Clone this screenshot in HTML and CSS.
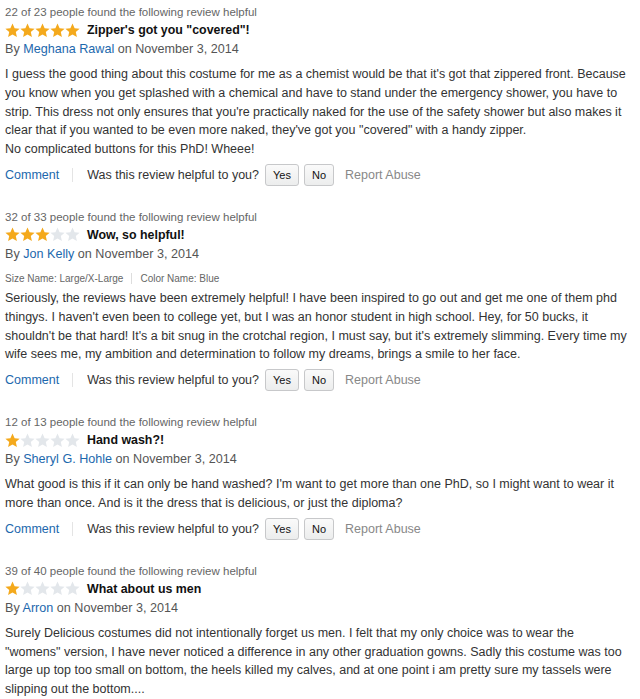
FILE: index.html
```html
<!DOCTYPE html>
<html lang="en">
<head>
    <meta charset="UTF-8">
    <title>Customer Reviews</title>
    <link rel="stylesheet" href="styles.css">
</head>
<body>
    <svg width="0" height="0" class="defs">
        <defs>
            <path id="star" d="M7.5 0.6 L9.6 5.2 L14.6 5.7 L10.8 9.0 L11.9 14 L7.5 11.4 L3.1 14 L4.2 9.0 L0.4 5.7 L5.4 5.2 Z"/>
        </defs>
    </svg>

    <!-- REVIEW 1 -->
    <div class="review">
        <div class="helpful">22 of 23 people found the following review helpful</div>
        <div class="title-row">
            <span class="stars">
                <svg viewBox="0 0 15 15" class="on"><use href="#star"/></svg><svg viewBox="0 0 15 15" class="on"><use href="#star"/></svg><svg viewBox="0 0 15 15" class="on"><use href="#star"/></svg><svg viewBox="0 0 15 15" class="on"><use href="#star"/></svg><svg viewBox="0 0 15 15" class="on"><use href="#star"/></svg>
            </span>
            <span class="title">Zipper's got you "covered"!</span>
        </div>
        <div class="byline">By <a href="#">Meghana Rawal</a> on November 3, 2014</div>
        <p class="body">I guess the good thing about this costume for me as a chemist would be that it's got that zippered front. Because you know when you get splashed with a chemical and have to stand under the emergency shower, you have to strip. This dress not only ensures that you're practically naked for the use of the safety shower but also makes it clear that if you wanted to be even more naked, they've got you "covered" with a handy zipper.<br>No complicated buttons for this PhD! Wheee!</p>
        <div class="actions">
            <a href="#" class="comment">Comment</a>
            <span class="question">Was this review helpful to you?</span>
            <button>Yes</button>
            <button>No</button>
            <span class="report">Report Abuse</span>
        </div>
    </div>

    <!-- REVIEW 2 -->
    <div class="review">
        <div class="helpful">32 of 33 people found the following review helpful</div>
        <div class="title-row">
            <span class="stars">
                <svg viewBox="0 0 15 15" class="on"><use href="#star"/></svg><svg viewBox="0 0 15 15" class="on"><use href="#star"/></svg><svg viewBox="0 0 15 15" class="on"><use href="#star"/></svg><svg viewBox="0 0 15 15" class="off"><use href="#star"/></svg><svg viewBox="0 0 15 15" class="off"><use href="#star"/></svg>
            </span>
            <span class="title">Wow, so helpful!</span>
        </div>
        <div class="byline">By <a href="#">Jon Kelly</a> on November 3, 2014</div>
        <div class="variant"><span class="size">Size Name: Large/X-Large</span><span>Color Name: Blue</span></div>
        <p class="body body-tight">Seriously, the reviews have been extremely helpful! I have been inspired to go out and get me one of them phd thingys. I haven't even been to college yet, but I was an honor student in high school. Hey, for 50 bucks, it shouldn't be that hard! It's a bit snug in the crotchal region, I must say, but it's extremely slimming. Every time my wife sees me, my ambition and determination to follow my dreams, brings a smile to her face.</p>
        <div class="actions">
            <a href="#" class="comment">Comment</a>
            <span class="question">Was this review helpful to you?</span>
            <button>Yes</button>
            <button>No</button>
            <span class="report">Report Abuse</span>
        </div>
    </div>

    <!-- REVIEW 3 -->
    <div class="review">
        <div class="helpful">12 of 13 people found the following review helpful</div>
        <div class="title-row">
            <span class="stars">
                <svg viewBox="0 0 15 15" class="on"><use href="#star"/></svg><svg viewBox="0 0 15 15" class="off"><use href="#star"/></svg><svg viewBox="0 0 15 15" class="off"><use href="#star"/></svg><svg viewBox="0 0 15 15" class="off"><use href="#star"/></svg><svg viewBox="0 0 15 15" class="off"><use href="#star"/></svg>
            </span>
            <span class="title">Hand wash?!</span>
        </div>
        <div class="byline">By <a href="#">Sheryl G. Hohle</a> on November 3, 2014</div>
        <p class="body">What good is this if it can only be hand washed? I'm want to get more than one PhD, so I might want to wear it more than once. And is it the dress that is delicious, or just the diploma?</p>
        <div class="actions">
            <a href="#" class="comment">Comment</a>
            <span class="question">Was this review helpful to you?</span>
            <button>Yes</button>
            <button>No</button>
            <span class="report">Report Abuse</span>
        </div>
    </div>

    <!-- REVIEW 4 -->
    <div class="review">
        <div class="helpful">39 of 40 people found the following review helpful</div>
        <div class="title-row">
            <span class="stars">
                <svg viewBox="0 0 15 15" class="on"><use href="#star"/></svg><svg viewBox="0 0 15 15" class="off"><use href="#star"/></svg><svg viewBox="0 0 15 15" class="off"><use href="#star"/></svg><svg viewBox="0 0 15 15" class="off"><use href="#star"/></svg><svg viewBox="0 0 15 15" class="off"><use href="#star"/></svg>
            </span>
            <span class="title">What about us men</span>
        </div>
        <div class="byline">By <a href="#">Arron</a> on November 3, 2014</div>
        <p class="body">Surely Delicious costumes did not intentionally forget us men. I felt that my only choice was to wear the "womens" version, I have never noticed a difference in any other graduation gowns. Sadly this costume was too large up top too small on bottom, the heels killed my calves, and at one point i am pretty sure my tassels were slipping out the bottom....</p>
    </div>
</body>
</html>
```

FILE: styles.css
```css
body {
    font-family: "Liberation Sans", Arial, sans-serif;
    color: #333;
    background: #fff;
    margin: 0;
    padding: 4px 8px 0 5px;
}

.defs {
    position: absolute;
}

.review {
    margin-bottom: 21px;
}

.helpful {
    font-size: 11.5px;
    line-height: 16px;
    color: #666;
}

.title-row {
    display: flex;
    align-items: center;
    height: 20px;
}

.stars {
    display: flex;
    width: 82px;
}

.stars svg {
    width: 15px;
    height: 15px;
}

.stars .on {
    fill: #f4a91c;
}

.stars .off {
    fill: #e3e7eb;
}

.title {
    font-size: 12.4px;
    font-weight: bold;
    color: #111;
}

.byline {
    font-size: 12.6px;
    line-height: 18px;
    color: #555;
}

.byline a,
.comment {
    color: #1c68ad;
    text-decoration: none;
}

.variant {
    font-size: 10px;
    color: #666;
    margin-top: 9px;
    line-height: 14px;
}

.variant .size {
    border-right: 1px solid #ddd;
    padding-right: 8px;
    margin-right: 8px;
}

.body {
    font-size: 12.5px;
    line-height: 18.8px;
    margin: 7px 0 3px;
}

.body-tight {
    margin-top: 3px;
}

.actions {
    display: flex;
    align-items: center;
    font-size: 12.5px;
    height: 26px;
}

.comment {
    padding-right: 13px;
    margin-right: 14px;
    border-right: 1px solid #e4e4e4;
    line-height: 14px;
}

.question {
    color: #333;
    margin-right: 6px;
}

.actions button {
    font-family: inherit;
    font-size: 11px;
    color: #111;
    background: linear-gradient(#fafafa, #eceded);
    border: 1px solid #c7c8ca;
    border-radius: 3px;
    height: 22px;
    padding: 0 7px;
    margin-right: 5px;
}

.report {
    color: #888;
    margin-left: 6px;
}
```
